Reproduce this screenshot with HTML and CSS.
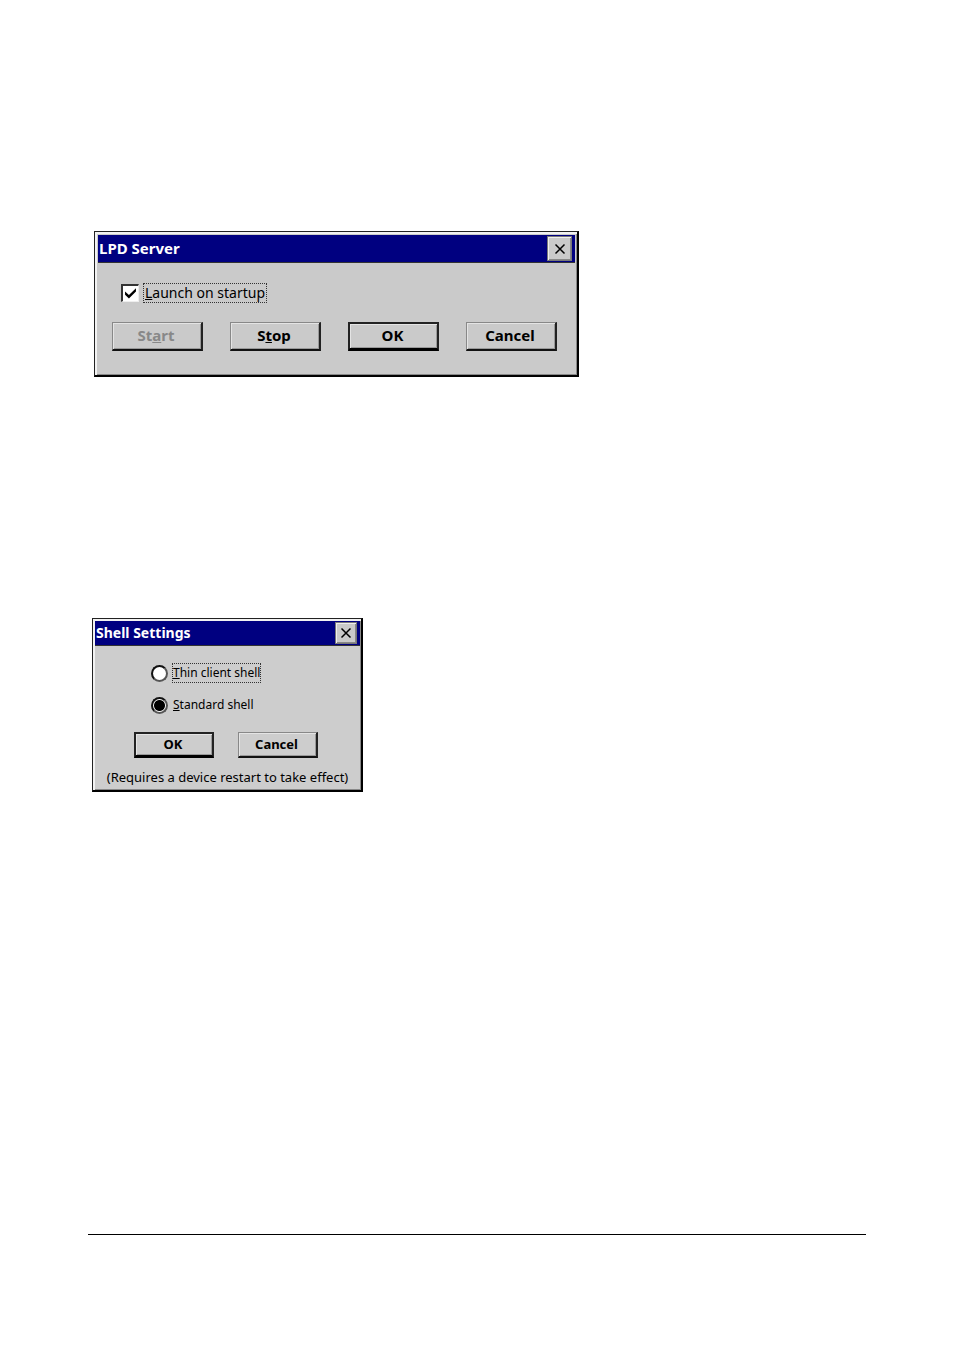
FILE: index.html
```
<!DOCTYPE html>
<html lang="en">
  <head>
    <meta charset="UTF-8" />
    <meta name="viewport" content="width=device-width, initial-scale=1.0" />
    <title>LPD Server and Shell Settings</title>
    <link rel="stylesheet" href="styles.css">
  </head>
  <body>
    <main class="content">
      <form class="dialog lpd">
        <div class="title-bar">
          <h2>LPD Server</h2>
          <button type="button" class="close" aria-label="Close">
            <svg width="12" height="12" viewBox="0 0 12 12"><path d="M1.5 1.5 10.5 10.5M10.5 1.5 1.5 10.5" /></svg>
          </button>
        </div>
        <div class="option">
          <input type="checkbox" id="launch" checked>
          <label for="launch" class="focused"><u>L</u>aunch on startup</label>
        </div>
        <div class="buttons">
          <button type="button" class="btn" disabled>St<u>a</u>rt</button>
          <button type="button" class="btn">S<u>t</u>op</button>
          <button type="button" class="btn default">OK</button>
          <button type="button" class="btn">Cancel</button>
        </div>
      </form>

      <form class="dialog shell">
        <div class="title-bar">
          <h2>Shell Settings</h2>
          <button type="button" class="close" aria-label="Close">
            <svg width="12" height="12" viewBox="0 0 12 12"><path d="M1.5 1.5 10.5 10.5M10.5 1.5 1.5 10.5" /></svg>
          </button>
        </div>
        <div class="options">
          <div class="option">
            <input type="radio" name="shell" id="thin">
            <label for="thin" class="focused"><u>T</u>hin client shell</label>
          </div>
          <div class="option">
            <input type="radio" name="shell" id="standard" checked>
            <label for="standard"><u>S</u>tandard shell</label>
          </div>
        </div>
        <div class="buttons">
          <button type="button" class="btn default">OK</button>
          <button type="button" class="btn">Cancel</button>
        </div>
        <p class="note">(Requires a device restart to take effect)</p>
      </form>
    </main>
    <hr class="rule">
  </body>
</html>
```
FILE: styles.css
```
* {
  margin: 0;
  padding: 0;
  box-sizing: border-box;
}
body {
  display: flex;
  flex-direction: column;
  min-height: 100vh;
  padding: 231px 88px 115px;
  background-color: #fff;
  color: #000;
  font-family: "Noto Sans", "Open Sans", sans-serif;
}
.content {
  flex: 1;
}
.rule {
  border: 0;
  border-top: 1px solid #000;
}
.dialog {
  max-width: 100%;
  background-color: #cacaca;
  border: 1px solid #222;
  border-right: 2px solid #000;
  border-bottom: 2px solid #000;
  box-shadow: inset 2px 2px #f2f2f2, inset -1px -1px #888;
}
.lpd {
  width: 485px;
  margin-left: 6px;
  padding: 3px 2px 24px 3px;
  font-size: 14px;
}
.shell {
  width: 271px;
  margin: 241px 0 0 4px;
  padding: 2px 1px 4px 2px;
  background-color: #cdcdcd;
  font-size: 12px;
}
.title-bar {
  display: flex;
  align-items: center;
  justify-content: space-between;
  height: 28px;
  padding: 0 3px 0 1px;
  background-color: #000080;
  border-bottom: 1px solid #333;
  color: #fff;
}
.title-bar h2 {
  padding-bottom: 2px;
  font-size: 15px;
  line-height: 20px;
}
.close {
  display: flex;
  align-items: center;
  justify-content: center;
  width: 25px;
  height: 25px;
  background-color: #cacaca;
  border: 1px solid #777;
  box-shadow: inset 1px 1px #eee, inset -1px -1px #888;
}
.close path {
  stroke: #000;
  stroke-width: 1.5;
}
.shell .title-bar {
  height: 25px;
}
.shell h2 {
  padding-bottom: 0;
  font-size: 14px;
}
.shell .close {
  width: 22px;
  height: 22px;
}
.option {
  display: flex;
  align-items: center;
  gap: 4px;
}
.option label {
  line-height: 18px;
  border: 1px solid transparent;
}
.option .focused {
  border: 1px dotted #333;
}
.lpd .option {
  margin: 20px 0 19px 23px;
}
.lpd label {
  padding: 0 1px;
}
.options {
  display: grid;
  gap: 12px;
  margin: 17px 0 17px 56px;
}
input[type="checkbox"],
input[type="radio"] {
  appearance: none;
  width: 17px;
  height: 17px;
  background-color: #fff;
}
input[type="checkbox"] {
  width: 18px;
  height: 18px;
  border: 2px solid #333;
  border-right: 1px solid #eee;
  border-bottom: 1px solid #eee;
}
input[type="checkbox"]:checked::before {
  content: "";
  display: block;
  width: 13px;
  height: 13px;
  margin: 1px;
  background-color: #000;
  clip-path: polygon(8% 35%, 38% 62%, 92% 10%, 92% 35%, 38% 88%, 8% 60%);
}
input[type="radio"] {
  border: 2px solid #111;
  border-right-color: #555;
  border-bottom-color: #555;
  border-radius: 50%;
}
input[type="radio"]:checked {
  background-image: radial-gradient(circle, #000 5px, #fff 6px);
}
.buttons {
  display: flex;
  gap: 27px;
  padding-left: 14px;
}
.btn {
  width: 91px;
  height: 29px;
  padding: 0 2px 2px 0;
  background-color: #cacaca;
  border: 1px solid #888;
  border-right: 2px solid #222;
  border-bottom: 2px solid #111;
  box-shadow: inset 1px 1px #e4e4e4, inset -1px -1px #999;
  color: #000;
  font-family: inherit;
  font-size: 15px;
  font-weight: bold;
  line-height: 20px;
}
.btn:disabled {
  color: #888;
}
.default {
  border: 2px solid #222;
  border-bottom: 3px solid #000;
}
.shell .buttons {
  gap: 24px;
  padding-left: 39px;
}
.shell .btn {
  width: 80px;
  height: 26px;
  background-color: #cdcdcd;
  font-size: 13px;
}
.note {
  margin-top: 10px;
  font-size: 13px;
  line-height: 18px;
  text-align: center;
}
```
